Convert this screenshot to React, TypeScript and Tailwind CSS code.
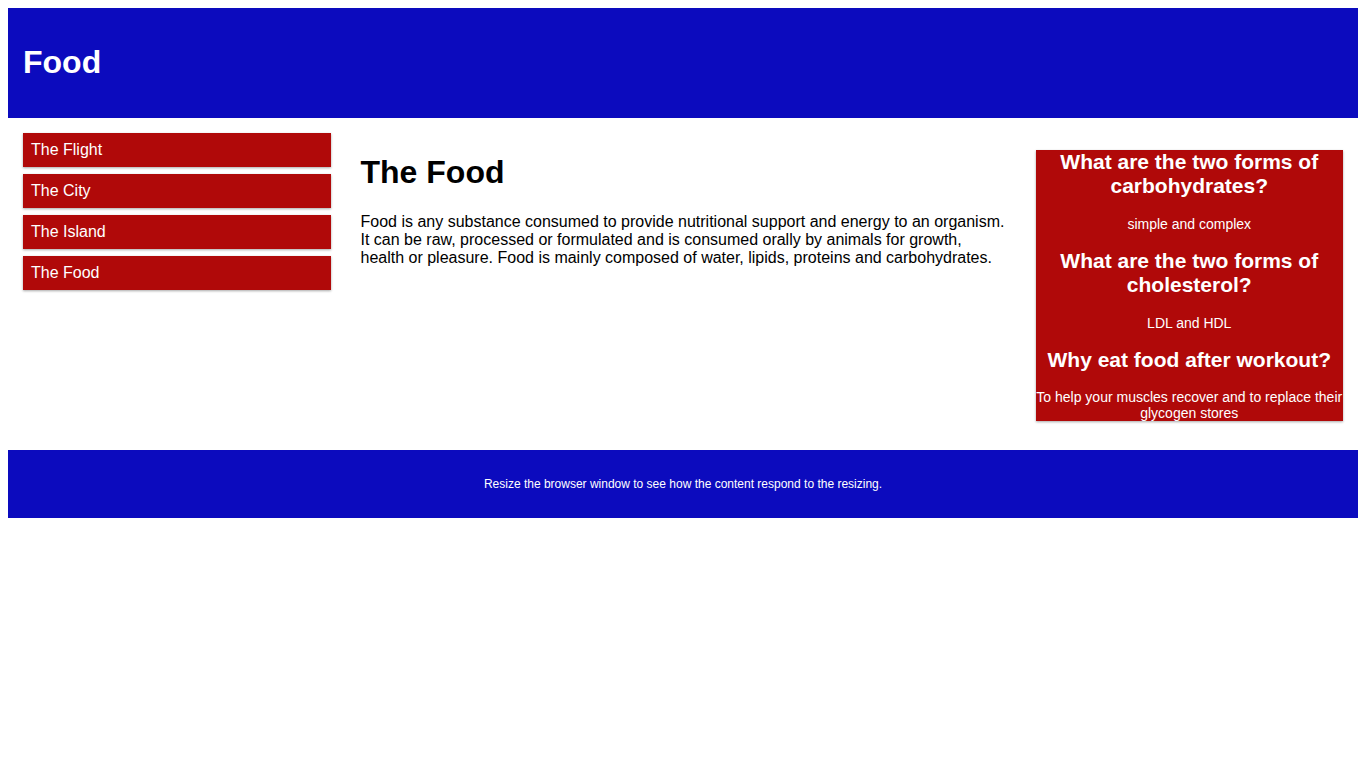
import React from 'react';

const menuItems = ['The Flight', 'The City', 'The Island', 'The Food'];

const questions = [
    { q: 'What are the two forms of carbohydrates?', a: 'simple and complex' },
    { q: 'What are the two forms of cholesterol?', a: 'LDL and HDL' },
    { q: 'Why eat food after workout?', a: 'To help your muscles recover and to replace their glycogen stores' },
];

export default function App() {
    return (
        <div className="p-2 font-['Liberation_Sans',Arial,sans-serif] text-[16px] leading-[normal] text-black bg-white min-h-screen">
            <div className="bg-[#0c0bbe] text-white p-[15px]">
                <h1 className="text-[32px] font-bold my-[21.44px]">Food</h1>
            </div>

            <div className="flex">
                <div className="w-1/4 p-[15px]">
                    <ul className="list-none m-0 p-0">
                        {menuItems.map((item) => (
                            <li
                                key={item}
                                className="p-2 mb-[7px] bg-[#b00909] text-white shadow-[0_1px_3px_rgba(0,0,0,0.12),0_1px_2px_rgba(0,0,0,0.24)]"
                            >
                                {item}
                            </li>
                        ))}
                    </ul>
                </div>

                <div className="w-1/2 p-[15px]">
                    <h1 className="text-[32px] font-bold my-[21.44px]">The Food</h1>
                    <p className="my-4">
                        Food is any substance consumed to provide nutritional support and energy to an organism. It can be raw, processed or formulated and is consumed orally by animals for growth, health or pleasure. Food is mainly composed of water, lipids, proteins and carbohydrates.
                    </p>
                </div>

                <div className="w-1/4 p-[15px]">
                    <div className="bg-[#b00909] text-white text-center text-[14px] shadow-[0_1px_3px_rgba(0,0,0,0.12),0_1px_2px_rgba(0,0,0,0.24)]">
                        {questions.map((item) => (
                            <React.Fragment key={item.q}>
                                <h2 className="text-[21px] font-bold my-[17.43px]">{item.q}</h2>
                                <p className="my-[14px]">{item.a}</p>
                            </React.Fragment>
                        ))}
                    </div>
                </div>
            </div>

            <div className="bg-[#0c0bbe] text-white text-center text-[12px] p-[15px]">
                <p className="my-3">Resize the browser window to see how the content respond to the resizing.</p>
            </div>
        </div>
    );
}
